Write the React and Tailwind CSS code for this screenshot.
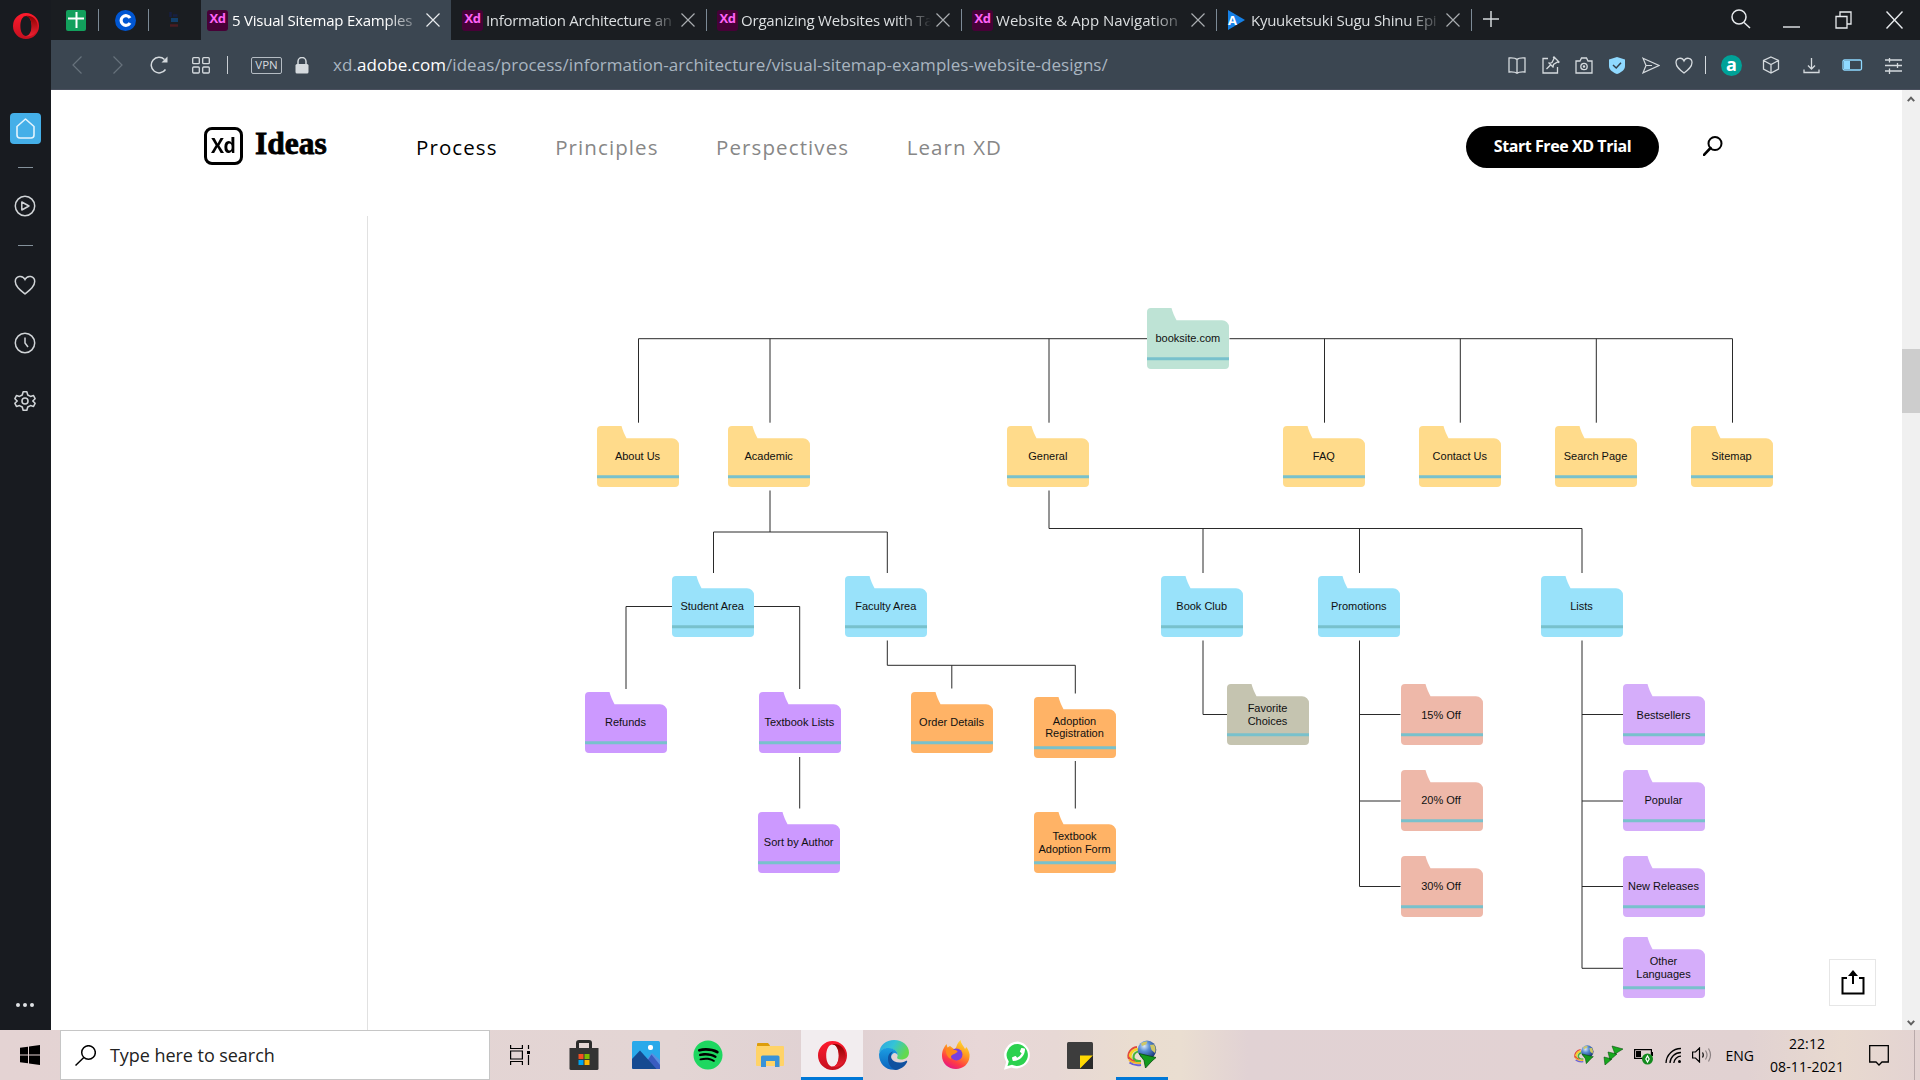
import React from "react";
import { FaSpotify, FaPhoneAlt } from "react-icons/fa";

const UI = "font-['Open_Sans','Noto_Sans',sans-serif]";

function Svg({ w = 20, h = w, box, className = "", children, sw = 1.3 }) {
  return (
    <svg
      width={w}
      height={h}
      viewBox={box || `0 0 ${w} ${h}`}
      fill="none"
      stroke="currentColor"
      strokeWidth={sw}
      className={`block shrink-0 ${className}`}
    >
      {children}
    </svg>
  );
}

function OperaLogo({ size, id }) {
  return (
    <Svg w={size} box="0 0 30 30">
      <defs>
        <linearGradient id={`${id}a`} x1="0" y1="0" x2="0" y2="1">
          <stop offset="0" stopColor="#ff1b2d" />
          <stop offset="1" stopColor="#c4101f" />
        </linearGradient>
        <linearGradient id={`${id}b`} x1="0" y1="0" x2="0" y2="1">
          <stop offset="0" stopColor="#8c0000" />
          <stop offset="1" stopColor="#ee2233" />
        </linearGradient>
      </defs>
      <path
        stroke="none"
        fill={`url(#${id}a)`}
        fillRule="evenodd"
        d="M15 0a15 15 0 1 0 0 30a15 15 0 1 0 0-30ZM15 3.500c3.800 0 6.500 5 6.500 11.500S18.800 26.500 15 26.500S8.500 21.500 8.500 15S11.200 3.500 15 3.500Z"
      />
      <path
        stroke="none"
        fill={`url(#${id}b)`}
        d="M11.500 5C18 .2 28 5 28.500 15S18 29.800 11.500 25C13 26.400 14 26.500 15 26.500C18.800 26.500 21.500 21.500 21.500 15S18.800 3.500 15 3.500C14 3.500 13 3.600 11.500 5Z"
      />
    </Svg>
  );
}

function XdFavicon() {
  return (
    <div className="flex h-[21px] w-[21px] shrink-0 items-center justify-center rounded-[3px] bg-[#470137] pb-[3px] text-[13px] font-bold tracking-[-0.5px] text-[#ff61f6]">
      Xd
    </div>
  );
}

function AFavicon() {
  return (
    <div className="relative flex h-[21px] w-[21px] shrink-0 items-center">
      <Svg w={18} h={20}>
        <path stroke="none" fill="#1580e6" d="M1 0L18 10L1 20Z" />
      </Svg>
      <span className="absolute left-[1px] text-[13px] font-bold leading-none text-white">A</span>
    </div>
  );
}

function Close({ className = "" }) {
  return (
    <Svg w={14} className={className} sw={1.2}>
      <path d="M.5 .5L13.500 13.500M13.500 .5L.5 13.500" />
    </Svg>
  );
}

const tabs = [
  { text: "Information Architecture an", track: "tracking-[-0.32px]" },
  { text: "Organizing Websites with Ta", track: "tracking-[-0.2px]" },
  { text: "Website & App Navigation", track: "tracking-[0.03px]" },
  { text: "Kyuuketsuki Sugu Shinu Epi", track: "tracking-[-0.26px]", a: true },
];

function TabBar() {
  return (
    <div className={`flex h-10 bg-[#1a1d21] text-[15px] ${UI}`}>
      <div className="flex w-[150px] items-center">
        <div className="ml-[15px] flex h-[21px] w-[20px] items-center justify-center rounded-[2px] bg-[#12a05c]">
          <Svg w={16} h={16} sw={2}>
            <path stroke="#fff" d="M0 6.500H16M8.500 0V16" />
          </Svg>
        </div>
        <div className="ml-3 h-[22px] w-px bg-[#7c8a96]" />
        <div className="ml-[16px] flex h-[21px] w-[21px] items-center justify-center rounded-full bg-[#0056d2]">
          <Svg w={13} h={13} sw={3.2}>
            <path stroke="#fff" d="M11 4A4.800 4.800 0 1 0 11 9" />
          </Svg>
        </div>
        <div className="ml-[12px] h-[22px] w-px bg-[#7c8a96]" />
        <Svg w={10} h={16} className="ml-5" sw={2.5}>
          <path stroke="#171f42" d="M1.500 0V5M4 3.500H8.500" />
          <path stroke="#123f6b" strokeWidth="4" d="M2 8H9" />
          <path stroke="#4a1d22" d="M1 13.500H9" />
        </Svg>
      </div>
      <div className="flex w-[250px] items-center bg-[#3b4651] pl-[6px] text-white">
        <XdFavicon />
        <div className="ml-[4px] w-[184px] overflow-hidden whitespace-nowrap pt-px tracking-[-0.22px] [mask-image:linear-gradient(to_right,#000_83%,rgba(0,0,0,0.35)_98%,transparent)]">
          5 Visual Sitemap Examples
        </div>
        <Close className="ml-[10px] text-[#e8ebee]" />
      </div>
      {tabs.map((t, i) => (
        <div key={t.text} className="flex w-[255px] items-center text-[#dcdfe1]">
          <div className={i ? "h-[22px] w-px bg-[#7c8a96]" : "h-[22px] w-px"} />
          <div className="w-[10px]" />
          {t.a ? <AFavicon /> : <XdFavicon />}
          <div
            className={`ml-[3px] w-[190px] overflow-hidden whitespace-nowrap pt-px [mask-image:linear-gradient(to_right,#000_82%,rgba(0,0,0,0.3)_96%,transparent)] ${t.track}`}
          >
            {t.text}
          </div>
          <Close className="ml-[5px] text-[#a9adb0]" />
        </div>
      ))}
      <div className="flex items-center text-[#d5d9dc]">
        <div className="h-[22px] w-px bg-[#7c8a96]" />
        <Svg w={16} className="ml-[11px] mb-[2px]" sw={1.5}>
          <path d="M8 0V16M0 8H16" />
        </Svg>
      </div>
      <div className="flex flex-1 items-center justify-end pr-[17px] text-[#e8ebee]">
        <Svg w={20} className="mr-[32px] mb-[3px]" sw={1.5}>
          <circle cx="8" cy="8" r="7" />
          <path d="M13 13.500L19 19" />
        </Svg>
        <Svg w={17} h={20} className="mr-[35px]" sw={1.4}>
          <path d="M0 17H17" />
        </Svg>
        <Svg w={17} h={18} className="mr-[34px] mb-[1px]" sw={1.3}>
          <path d="M1 5.500H12V17H1ZM5 5V1H16V13H12.500" />
        </Svg>
        <Svg w={17} h={18} className="mb-[1px]" sw={1.4}>
          <path d="M.5 .5L16.500 17.500M16.500 .5L.5 17.500" />
        </Svg>
      </div>
    </div>
  );
}

function AddressBar() {
  return (
    <div className={`flex h-[50px] items-center bg-[#3b4651] text-[#d5dade] shadow-[inset_0_-1px_0_#4a505e] ${UI}`}>
      <div className="flex w-[282px] items-center">
        <Svg w={10} h={18} className="ml-[21px] text-[#67727c]" sw={1.2}>
          <path d="M9.500 .5L1 9L9.500 17.500" />
        </Svg>
        <Svg w={10} h={18} className="ml-[31px] text-[#67727c]" sw={1.2}>
          <path d="M.5 .5L9 9L.5 17.500" />
        </Svg>
        <Svg w={18} h={18} className="ml-[27px]" sw={1.5}>
          <path d="M15.500 13.500A7.800 7.800 0 1 1 14.500 3.500" />
          <path stroke="none" fill="currentColor" d="M17.500 .5V6.500H11.500Z" />
        </Svg>
        <Svg w={18} h={17} className="ml-[24px]" sw={1.3}>
          <rect x=".7" y=".7" width="6.600" height="6" rx="1" />
          <rect x="10.700" y=".7" width="6.600" height="6" rx="1" />
          <rect x=".7" y="10" width="6.600" height="6" rx="1" />
          <rect x="10.700" y="10" width="6.600" height="6" rx="1" />
        </Svg>
        <div className="ml-[17px] h-[18px] w-px bg-[#c9ced3]" />
        <div className="ml-[23px] flex h-[17px] w-[31px] items-center justify-center rounded-[2px] border border-[#b5bcc3] text-[11.5px] leading-none text-[#d5dade]">
          VPN
        </div>
        <Svg w={14} h={17} className="ml-[13px]" sw={1.5}>
          <rect x=".5" y="7" width="13" height="9.500" rx="1.500" fill="currentColor" stroke="none" />
          <path d="M3 8V4.500A4 4 0 0 1 11 4.500V8" />
        </Svg>
      </div>
      <div className="whitespace-nowrap pb-px text-[17px] tracking-[0.055px] text-[#a9b5c0]">
        xd.<span className="text-white">adobe.com</span>
        /ideas/process/information-architecture/visual-sitemap-examples-website-designs/
      </div>
      <div className="flex flex-1 items-center justify-end pr-[18px]">
        <Svg w={18} h={17} sw={1.3}>
          <path d="M9 2.500C7.500 1 4 .8 1 1V15C4 14.800 7.500 15 9 16.300C10.500 15 14 14.800 17 15V1C14 .8 10.500 1 9 2.500ZM9 2.500V16" />
        </Svg>
        <Svg w={18} h={18} className="ml-4" sw={1.3}>
          <path d="M6 2.500H1V17H15.500V11M4.500 13L8.500 9M6.500 6.500L11.500 11.500M7.500 7.500L10 6.500L12 2.500L11.500 1.500L12 1L17 6L16.500 6.500L15.500 6L11.500 8.500L11 11" />
        </Svg>
        <Svg w={18} h={17} className="ml-[15px]" sw={1.3}>
          <path d="M1 4H5L6.500 1H11.500L13 4H17V16H1Z" />
          <circle cx="9" cy="9.500" r="3.200" />
          <circle cx="9" cy="9.500" r=".6" />
        </Svg>
        <Svg w={16} h={17} className="ml-4" sw={1.5}>
          <path fill="#8fd9ff" stroke="none" d="M8 0L16 2.500V9C16 13 12 15.500 8 17C4 15.500 0 13 0 9V2.500Z" />
          <path stroke="#33414d" d="M4 8L7.200 11L12 5.800" />
        </Svg>
        <Svg w={18} h={17} className="ml-[17px]" sw={1.2}>
          <path d="M1 1.200L17 8.500L1 15.800L4 8.500ZM4 8.500H10" />
        </Svg>
        <Svg w={18} h={17} className="ml-[15px]" sw={1.3}>
          <path d="M9 16C5 13 1 10 1 5.500C1 1 7 -.5 9 4C11 -.5 17 1 17 5.500C17 10 13 13 9 16Z" />
        </Svg>
        <div className="ml-3 h-[18px] w-px bg-[#d5dade]" />
        <div className="ml-[15px] flex h-[21px] w-[21px] items-center justify-center rounded-full bg-[#00a298] pb-[3px] text-[18px] font-bold leading-none text-white">
          a
        </div>
        <Svg w={18} h={18} className="ml-[20px]" sw={1.3}>
          <path d="M9 1L16.500 4.500V13L9 17L1.500 13V4.500ZM1.500 4.500L9 8.500L16.500 4.500M9 8.500V17" />
        </Svg>
        <Svg w={17} h={17} className="ml-[23px]" sw={1.3}>
          <path d="M8.500 1V12M5 8.500L8.500 12L12 8.500M1 12.500V15.500H16V12.500" />
        </Svg>
        <Svg w={21} h={12} className="ml-[22px]" sw={1.3}>
          <rect x="1" y="1" width="18.500" height="10" rx="1.500" stroke="#8fd9ff" />
          <rect x="2" y="2" width="6" height="8" fill="#8fd9ff" stroke="none" />
        </Svg>
        <Svg w={17} h={17} className="ml-[22px]" sw={1.3}>
          <path d="M0 3H17M0 8.500H17M0 14H17M4.500 1V5.500M12.500 6V11M4.500 11.500V17" />
        </Svg>
      </div>
    </div>
  );
}

function Sidebar() {
  return (
    <aside className="flex w-[51px] flex-col items-center bg-[#181b20] pr-px text-[#d0d4d7]">
      <div className="ml-px mt-[13px]">
        <OperaLogo size={26} id="side" />
      </div>
      <div className="ml-px mt-[74px] flex h-[31px] w-[31px] items-center justify-center rounded-[4px] bg-[#44afe8]">
        <Svg w={21} sw={1.6}>
          <path stroke="#e3f4fd" d="M10.500 1L19 8.500V17A3 3 0 0 1 16 20H5A3 3 0 0 1 2 17V8.500Z" strokeLinejoin="round" />
        </Svg>
      </div>
      <div className="ml-px mt-[23px] h-px w-[15px] bg-[#84919b]" />
      <Svg w={22} className="mt-[27px]" sw={1.5}>
        <circle cx="11" cy="11" r="9.700" />
        <path d="M7.800 7L15 11L7.800 15Z" strokeLinejoin="round" />
      </Svg>
      <div className="ml-px mt-[28px] h-px w-[15px] bg-[#84919b]" />
      <Svg w={22} className="mt-[28px]" sw={1.5}>
        <path d="M11 20C6 16 1.300 12.500 1.300 7.500C1.300 2 8.500 .5 11 5.500C13.500 .5 20.700 2 20.700 7.500C20.700 12.500 16 16 11 20Z" />
      </Svg>
      <Svg w={22} className="mt-[36px]" sw={1.5}>
        <circle cx="11" cy="11" r="9.700" />
        <path d="M11 5.500V11L14 15" />
      </Svg>
      <Svg w={22} box="0 0 24 24" className="mt-[36px]" sw={1.7}>
        <path d="M10 2H14L15 5.500L18 7L21.300 6L23 9.500L20.500 12L23 14.500L21.300 18L18 17L15 18.500L14 22H10L9 18.500L6 17L2.700 18L1 14.500L3.500 12L1 9.500L2.700 6L6 7L9 5.500Z" strokeLinejoin="round" />
        <circle cx="12" cy="12" r="3.300" />
      </Svg>
      <div className="mt-auto mb-[23px] flex gap-[3px]">
        <i className="h-1 w-1 rounded-full bg-[#dfe2e4]" />
        <i className="h-1 w-1 rounded-full bg-[#dfe2e4]" />
        <i className="h-1 w-1 rounded-full bg-[#dfe2e4]" />
      </div>
    </aside>
  );
}

function SiteHeader() {
  return (
    <header className={`flex h-[126px] shrink-0 items-start pl-[153px] text-black ${UI}`}>
      <div className="mt-[37px] flex h-[38px] w-[39px] items-center justify-center rounded-[8px] border-[3px] border-black">
        <span className="origin-center scale-x-[0.93] pb-[2px] text-[21px] font-bold leading-none tracking-[-0.5px]">Xd</span>
      </div>
      <div className="ml-[12px] mt-[36px] w-[161px] font-['Liberation_Serif',serif] text-[31.5px] font-bold leading-[36px] [-webkit-text-stroke:0.8px_black]">
        Ideas
      </div>
      <nav className="mt-[42px] flex gap-[57.5px] text-[20.5px] leading-[31px] tracking-[1.1px] text-[#878787]">
        <span className="text-black">Process</span>
        <span>Principles</span>
        <span>Perspectives</span>
        <span>Learn XD</span>
      </nav>
      <div className="ml-auto mr-[44px] mt-[36px] flex h-[42px] w-[193px] items-center justify-center rounded-full bg-black pb-[2px] text-[16px] font-bold tracking-[-0.43px] text-white">
        Start Free XD Trial
      </div>
      <Svg w={20} className="mr-[179px] mt-[46px]" sw={2}>
        <circle cx="12" cy="7.500" r="6.500" />
        <path d="M7.500 12L1 18.800" strokeWidth="2.600" strokeLinecap="round" />
      </Svg>
    </header>
  );
}

/* Sitemap canvas: its own origin sits at (368, 216) in window coordinates. */
const OX = 368;
const OY = 216;
const GREEN = "#bee3d5";
const YELLOW = "#ffdb8b";
const BLUE = "#99e2fa";
const PURPLE = "#cc99ff";
const ORANGE = "#ffb366";
const TAN = "#c5c4b0";
const SALMON = "#eeb8a9";
const LILAC = "#d5adfa";

const nodes = [
  [1147.3, 308.2, GREEN, "booksite.com"],
  [597, 426, YELLOW, "About Us"],
  [728.2, 426, YELLOW, "Academic"],
  [1007.3, 426, YELLOW, "General"],
  [1283.3, 426, YELLOW, "FAQ"],
  [1419.3, 426, YELLOW, "Contact Us"],
  [1555, 426, YELLOW, "Search Page"],
  [1691, 426, YELLOW, "Sitemap"],
  [671.7, 576, BLUE, "Student Area"],
  [845.3, 576, BLUE, "Faculty Area"],
  [1161.2, 576, BLUE, "Book Club"],
  [1318.3, 576, BLUE, "Promotions"],
  [1541, 576, BLUE, "Lists"],
  [585, 692, PURPLE, "Refunds"],
  [758.8, 692, PURPLE, "Textbook Lists"],
  [911, 692, ORANGE, "Order Details"],
  [1034, 696.5, ORANGE, "Adoption\nRegistration"],
  [758.2, 812, PURPLE, "Sort by Author"],
  [1034, 812, ORANGE, "Textbook\nAdoption Form"],
  [1227, 684.3, TAN, "Favorite\nChoices", true],
  [1400.5, 684.3, SALMON, "15% Off"],
  [1400.5, 770, SALMON, "20% Off"],
  [1400.5, 855.5, SALMON, "30% Off"],
  [1623, 684.3, LILAC, "Bestsellers"],
  [1623, 770, LILAC, "Popular"],
  [1623, 855.5, LILAC, "New Releases"],
  [1623, 937.3, LILAC, "Other\nLanguages"],
];

const wires =
  "M1147.5 338.700H638.500V422.700 M770 338.700V422.700 M1049 338.700V422.700 M1229.500 338.700H1732.500V422.700 M1324.500 338.700V422.700 M1460.300 338.700V422.700 M1596.300 338.700V422.700" +
  "M770 490.500V532 M713.500 573V532H887.300V573 M1049 490.500V528.500H1582V573 M1203 528.500V573 M1359.500 528.500V573" +
  "M672 606.500H626V689 M754 606.500H799.700V689 M887.300 640.500V665.300H1075.300V693.500 M951.800 665.300V688.500" +
  "M799.700 757V808.500 M1075.300 761V808.500 M1203 640.500V714.500H1227" +
  "M1359.500 640.500V886.500H1400.500 M1359.500 714.500H1400.500 M1359.500 801H1400.500" +
  "M1582 640.500V968.300H1623 M1582 714.500H1623 M1582 801H1623 M1582 886.500H1623";

function Folder({ x, y, color, label, left }) {
  return (
    <div className="absolute h-[61px] w-[82px]" style={{ left: x - OX, top: y - OY }}>
      <Svg w={82} h={61}>
        <path
          fill={color}
          stroke="none"
          d="M4 0H24.500C25.500 4 27.500 8.500 29.500 12.300H75A7 7 0 0 1 82 19.300V57A4 4 0 0 1 78 61H4A4 4 0 0 1 0 57V4A4 4 0 0 1 4 0Z"
        />
        <path stroke="#78c1cc" strokeWidth="3" d="M0 50.800H82" />
      </Svg>
      <div
        className={`absolute left-[-7px] top-0 flex h-[61px] w-[95px] items-center justify-center whitespace-pre font-['Liberation_Sans',Arial,sans-serif] text-[11px] leading-[12.5px] text-[#101010] ${left ? "text-left" : "text-center"}`}
      >
        {label}
      </div>
    </div>
  );
}

function Sitemap() {
  return (
    <div className="relative flex-1 border-l border-[#e1e1e1]">
      <svg
        className="absolute -left-px top-0"
        width="1535"
        height="814"
        viewBox={`${OX - 1} ${OY} 1535 814`}
        fill="none"
        stroke="#2a2a2a"
        strokeWidth="1"
      >
        <path d={wires} />
      </svg>
      {nodes.map(([x, y, color, label, left]) => (
        <Folder key={label} x={x} y={y} color={color} label={label} left={left} />
      ))}
      <div className="absolute bottom-6 right-[26px] flex h-[47px] w-[47px] items-center justify-center border border-[#e6e6e6] bg-white text-black">
        <Svg w={24} h={25} sw={2}>
          <path d="M6 8H1.500V23.500H22.500V8H18M12 14V3" />
          <path fill="currentColor" stroke="none" d="M12 0L17 6H7Z" />
        </Svg>
      </div>
    </div>
  );
}

function Scrollbar() {
  return (
    <div className="flex w-[18px] flex-col items-center bg-[#f0f0f0] text-[#606060]">
      <Svg w={8} h={6} className="mt-[6px]" sw={2}>
        <path d="M.8 5.200L4 1.700L7.200 5.200" />
      </Svg>
      <div className="mt-[247px] h-[64px] w-full bg-[#cdcdcd]" />
      <Svg w={8} h={6} className="mt-auto mb-[4px]" sw={2}>
        <path d="M.8 .8L4 4.300L7.200 .8" />
      </Svg>
    </div>
  );
}

function IdmIcon({ size, id }) {
  return (
    <Svg w={size} box="0 0 30 30">
      <defs>
        <radialGradient id={id} cx=".35" cy=".3" r=".8">
          <stop offset="0" stopColor="#dcebf7" />
          <stop offset=".35" stopColor="#5b90d6" />
          <stop offset="1" stopColor="#10296a" />
        </radialGradient>
      </defs>
      <path stroke="#e2493a" strokeWidth="2" d="M10 7A10 9 0 0 0 2 19" />
      <path stroke="#f5d326" strokeWidth="2.600" d="M11 9.200A8 7.500 0 0 0 4 20" />
      <path stroke="#46b53c" strokeWidth="2.200" d="M11.500 11.500A6 6 0 0 0 6.500 18Q8 22 14 21" />
      <path stroke="#e2493a" strokeWidth="1.800" d="M1.500 17Q3 20 8 21.500" />
      <path stroke="#f5b326" strokeWidth="1.800" d="M2 20Q6 23.500 14 23" />
      <path stroke="#6a62d8" strokeWidth="2" d="M2.500 22.500Q7 26 14 25" />
      <circle cx="20" cy="9.800" r="9.300" fill={`url(#${id})`} stroke="none" />
      <path fill="#cfc765" stroke="none" d="M14 3.500Q17 1 20.500 1.500L19 4.500L15 6ZM23 5L27 4.500Q29.500 9 28 13L24.500 10Z" />
      <path fill="#139a1c" stroke="#084d0c" strokeWidth=".8" d="M12 13.500L29 17.500L25 21L18.500 28L17 20.500Z" />
    </Svg>
  );
}

function EdgeIcon() {
  return (
    <Svg w={30} box="0 0 30 30">
      <defs>
        <linearGradient id="edge-top" x1="0" y1="0" x2="1" y2=".4">
          <stop offset="0" stopColor="#2fa3e0" />
          <stop offset=".5" stopColor="#34c3d8" />
          <stop offset="1" stopColor="#63d94e" />
        </linearGradient>
        <linearGradient id="edge-left" x1="0" y1="0" x2="0" y2="1">
          <stop offset="0" stopColor="#1b9de2" />
          <stop offset="1" stopColor="#0b63bd" />
        </linearGradient>
      </defs>
      <g stroke="none">
        <path fill="url(#edge-top)" d="M0 13C1 5 7 0 15 0C24 0 30 6 30 12.500C30 17 26.500 19.500 22 19.500C19 19.500 17.500 18.500 18.300 17C20 13 16 8.500 10 8.500C5 8.500 1.500 10.500 0 13Z" />
        <path fill="url(#edge-left)" d="M0 14.500C.5 10 5 7.800 10 8C15.500 8.400 19 12 18.500 15C17 11.500 12.500 12.500 12 17.500C11.500 23 15 28 20 29C9 32.500 0 25 0 14.500Z" />
        <path fill="#10519f" d="M9 19C9 15 11 12 14.500 11.600C12 13 11.300 16 12.500 18.500C14.500 22.500 21 24 26.800 21C28 20.500 28.500 21.200 28 22.300C25.500 27 21 29.700 16.500 30C12 28.500 9 24 9 19Z" />
      </g>
    </Svg>
  );
}

function FirefoxIcon() {
  return (
    <Svg w={28} h={30} box="0 0 28 30">
      <defs>
        <linearGradient id="fox" x1=".8" y1="0" x2=".3" y2="1">
          <stop offset="0" stopColor="#ffe334" />
          <stop offset=".4" stopColor="#ff9a1f" />
          <stop offset=".75" stopColor="#ff3c45" />
          <stop offset="1" stopColor="#e31587" />
        </linearGradient>
      </defs>
      <g stroke="none">
        <path fill="url(#fox)" d="M14 29C6 29 0 23 0 16C0 11 1.500 8.500 3 6L4.500 4L5.500 7.500L8 6L12 9C13 9 14 8 15 5C16 3 17 1.500 18.500 0C19 4 22 6 23 9L24.500 7C27 11 28 14 27.500 17C27 24 21 29 14 29Z" />
        <circle cx="14.500" cy="14.500" r="6" fill="#7a3fe0" />
        <path fill="#ff8a1c" d="M4 9C7 7.500 9 9 12 10C14 10 15.500 10.500 15.500 12C13.500 13 13 14 11 14.500C9 15 8.500 17 9 19C5 17 3.500 13 4 9Z" />
      </g>
    </Svg>
  );
}

const apps = [
  {
    id: "store",
    icon: (
      <Svg w={30} box="0 0 30 30">
        <path stroke="#2b2b2b" strokeWidth="3" d="M8.500 9V3Q8.500 1.500 10 1.500H20Q21.500 1.500 21.500 3V9" />
        <path fill="#333" stroke="none" d="M.5 8H29.500V28.500Q29.500 30 28 30H2Q.5 30 .5 28.500Z" />
        <g stroke="none">
          <path fill="#f25022" d="M9.500 14H14.500V19H9.500Z" />
          <path fill="#7fba00" d="M15.500 14H20.500V19H15.500Z" />
          <path fill="#00a4ef" d="M9.500 20H14.500V25H9.500Z" />
          <path fill="#ffb900" d="M15.500 20H20.500V25H15.500Z" />
        </g>
      </Svg>
    ),
  },
  {
    id: "photos",
    icon: (
      <Svg w={28} box="0 0 28 28">
        <g stroke="none">
          <rect width="28" height="28" rx="1.500" fill="#29a9ea" />
          <path fill="#5b8fe0" d="M12 22L20 12L28 19V28H12Z" />
          <path fill="#3a5cc0" d="M14 22L19.500 13.500L28 24V28H14Z" />
          <path fill="#154a91" d="M0 18L8 9.500L24.500 28H1.500Q0 28 0 26.500Z" />
          <rect x="16" y="4" width="5" height="5" rx="2" fill="#fff" />
        </g>
      </Svg>
    ),
  },
  {
    id: "spotify",
    icon: (
      <div className="rounded-full bg-[radial-gradient(#000_58%,transparent_60%)]">
        <FaSpotify size={30} color="#1ed760" />
      </div>
    ),
  },
  {
    id: "files",
    icon: (
      <Svg w={28} h={24} box="0 0 28 24">
        <g stroke="none">
          <path fill="#dd9d0b" d="M1 1Q1 0 2 0H12L14 2.500V5H1Z" />
          <rect x="0" y="3" width="28" height="20" rx="1" fill="#ffd368" />
          <path fill="#3a93d8" d="M5 24V14Q5 12.500 6.500 12.500H22Q23.500 12.500 23.500 14V24H19V18H10V24Z" />
        </g>
      </Svg>
    ),
  },
  { id: "opera", icon: <OperaLogo size={29} id="task" />, active: true },
  { id: "edge", icon: <EdgeIcon /> },
  { id: "firefox", icon: <FirefoxIcon /> },
  {
    id: "whatsapp",
    icon: (
      <div className="relative">
        <Svg w={28} h={29} box="0 0 28 29">
          <path fill="#fff" stroke="none" d="M14 .5A13.500 13.500 0 1 1 7.500 26.500L0 28.800L2.200 21A13.500 13.500 0 0 1 14 .5Z" />
          <path fill="#2bd14e" stroke="none" d="M14 3A11 11 0 1 1 8 23.800L3.500 25L4.800 20.500A11 11 0 0 1 14 3Z" />
        </Svg>
        <FaPhoneAlt size={13} color="#fff" className="absolute left-[8px] top-[7px] -scale-x-100" />
      </div>
    ),
  },
  {
    id: "notes",
    icon: (
      <Svg w={26} h={27} box="0 0 26 27">
        <rect width="26" height="27" rx="1.500" fill="#3d3d3d" stroke="none" />
        <path fill="#ffd802" stroke="none" d="M13 13.500H26L13 26.500Z" />
        <path fill="#2a2a2a" stroke="none" d="M26 13.500V27H13Z" />
      </Svg>
    ),
  },
  { id: "idm", icon: <IdmIcon size={30} id="idm-globe" />, running: true },
];

function Taskbar() {
  return (
    <footer
      className={`flex h-[50px] bg-[#e2d3d3] bg-[linear-gradient(90deg,#e4d3d3_0%,#e3d5d4_35%,#e0d1d3_44%,#e8d7d7_51%,#e7d8d5_55%,#eaddd0_59%,#eaded1_61.5%,#e1d2d4_65%,#e2d2d3_80%,#e1d2d2_91%,#e8d9cf_96%,#e3d3d2_100%)] text-black ${UI}`}
    >
      <div className="flex w-[60px] items-center justify-center">
        <Svg w={20}>
          <path fill="#000" stroke="none" d="M0 2.800L8 1.700V9.500H0ZM9 1.500L20 0V9.500H9ZM0 10.500H8V18.300L0 17.200ZM9 10.500H20V20L9 18.500Z" />
        </Svg>
      </div>
      <div className="flex w-[430px] items-center border border-[#c6c6c6] bg-white pl-[14px]">
        <Svg w={21} sw={1.5}>
          <circle cx="13.500" cy="7.500" r="6.800" />
          <path d="M8.800 12.500L.5 20.500" />
        </Svg>
        <div className="ml-[14px] pt-px text-[18px] tracking-[-0.05px] text-[#222]">Type here to search</div>
      </div>
      <div className="mr-px flex w-[62px] items-center justify-center pr-px">
        <Svg w={21} h={20} sw={1.2}>
          <path d="M.6 0V3.500H12.400V0M.6 20V16.500H12.400V20M.6 6H12.400V14H.6ZM18.500 0V4M18.500 10V20" />
          <rect x="17" y="6" width="3" height="3" fill="currentColor" stroke="none" />
        </Svg>
      </div>
      {apps.map((a) => (
        <div
          key={a.id}
          className={`relative flex w-[62px] items-center justify-center ${a.active ? "bg-[#f2edef]" : ""}`}
        >
          {a.icon}
          {a.active && <div className="absolute inset-x-0 bottom-0 h-[3px] bg-[#0078d7]" />}
          {a.running && <div className="absolute inset-x-[5px] bottom-0 h-[3px] bg-[#0078d7]" />}
        </div>
      ))}
      <div className="ml-auto flex items-center">
        <IdmIcon size={20} id="tray-globe" />
        <Svg w={20} className="ml-[9px]" sw={0.6}>
          <path fill="#17a81e" stroke="#0b5410" d="M9 1L20 4L12 9ZM5 7L14 9L7 15ZM1 12L9 14L2 20Z" />
        </Svg>
        <Svg w={20} className="ml-[11px]" sw={1.2}>
          <path d="M.6 4.600H17.400V13.400H.6Z" />
          <path fill="currentColor" stroke="none" d="M2 6H7V12H2ZM17.500 7H19V11H17.500Z" />
          <circle cx="13.500" cy="14" r="5.500" fill="#138a1e" stroke="none" />
          <path stroke="#fff" strokeWidth="1.200" d="M13.500 11L15.200 14L13.500 17L11.800 14Z" />
        </Svg>
        <Svg w={17} h={17} className="ml-[11px]" sw={1.3}>
          <path d="M1 16A15 15 0 0 1 16 1.500M5 16A11 11 0 0 1 16 5.500M8.800 16A7.500 7.500 0 0 1 16 9.200" />
          <circle cx="14.500" cy="14.500" r="1.500" fill="currentColor" stroke="none" />
        </Svg>
        <Svg w={21} h={16} className="ml-[10px]" sw={1.2}>
          <path d="M.6 5H3.500L7.500 1V15L3.500 11H.6ZM10.500 5.500Q12 8 10.500 10.500" />
          <path stroke="#8a8082" d="M13.500 3.500Q16.500 8 13.500 12.500M16.500 1.500Q20.500 8 16.500 14.500" />
        </Svg>
        <div className="ml-[13px] text-[14px]">ENG</div>
        <div className="ml-[10px] w-[86px] text-center text-[14px] leading-[23px] tracking-[0.1px]">
          <div>22:12</div>
          <div>08-11-2021</div>
        </div>
        <Svg w={20} h={21} className="ml-[19px] mr-[25px]" sw={1.3}>
          <path d="M.7 .7H19.300V17H13L10 20L7 17H.7Z" />
        </Svg>
        <div className="mr-[5px] h-[50px] w-px bg-[#b9aaab]" />
      </div>
    </footer>
  );
}

export default function App() {
  return (
    <div className="flex h-[1080px] w-[1920px] flex-col overflow-hidden bg-white">
      <div className="flex h-[1030px]">
        <Sidebar />
        <div className="flex min-w-0 flex-1 flex-col">
          <TabBar />
          <AddressBar />
          <div className="flex min-h-0 flex-1">
            <main className="flex min-w-0 flex-1 flex-col bg-white">
              <SiteHeader />
              <div className="flex flex-1">
                <div className="w-[316px]" />
                <Sitemap />
              </div>
            </main>
            <Scrollbar />
          </div>
        </div>
      </div>
      <Taskbar />
    </div>
  );
}
